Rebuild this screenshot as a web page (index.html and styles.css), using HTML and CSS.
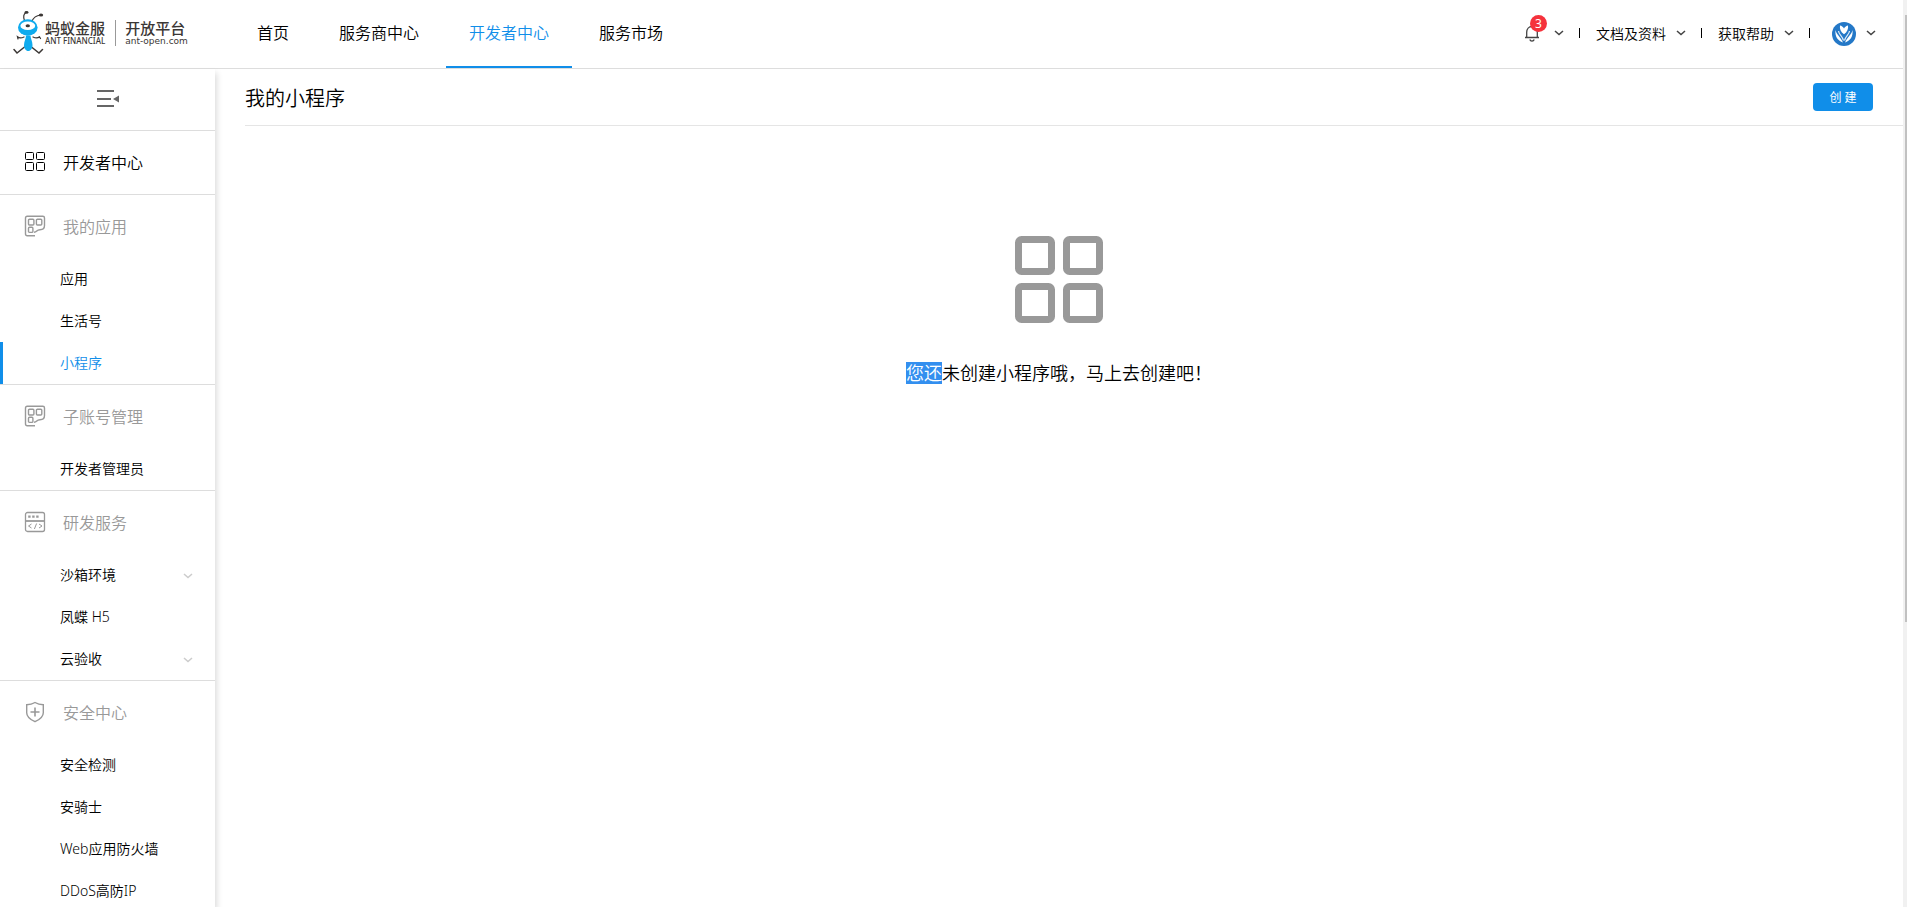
FILE: index.html
```html
<!DOCTYPE html>
<html lang="zh-CN">
<head>
  <meta charset="UTF-8" />
  <meta name="viewport" content="width=device-width, initial-scale=1.0" />
  <title>我的小程序 - 开放平台</title>
  <link rel="stylesheet" href="styles.css">
</head>
<body>
  <!-- shared icons -->
  <svg class="sprite" aria-hidden="true">
    <symbol id="i-down" viewBox="0 0 10 6"><path d="M1 1l4 3.6L9 1" fill="none" stroke="currentColor" stroke-width="1.5"/></symbol>
    <symbol id="i-app" viewBox="0 0 22 22">
      <g fill="none" stroke="currentColor" stroke-width="1.4">
        <path d="M11 20.7H3.2c-1 0-1.700-.7-1.700-1.700V3c0-1 .7-1.700 1.700-1.700h15.600c1 0 1.700.7 1.700 1.700v7.500c0 3-2 4.200-4.500 4.200-4 0-2.500 2.500-6 2.500"/>
        <rect x="4.500" y="4.200" width="5.400" height="5.800" rx="1"/>
        <rect x="12.400" y="4.200" width="5.400" height="5.800" rx="1"/>
        <rect x="4.500" y="12.200" width="4.400" height="5.200" rx="1"/>
      </g>
    </symbol>
  </svg>

  <div class="app">
    <header class="header">
      <a class="logo" href="#">
        <svg class="logo-ant" width="32" height="46" viewBox="0 0 32 46">
          <g fill="none" stroke="#3b3735" stroke-width="1.2" stroke-linecap="round">
            <path d="M11.500 10.500C10 6.500 10.500 4 13 2.500M19 11c1.500-3.500 4.500-5.500 8.500-6"/>
            <path d="M11 27c-2 1-4.500 1.500-6.500-.2L5 29M20 27c2 1 4.500 1.500 6.500-.2l1 1.700"/>
            <path d="M11.500 37l-7.500 6-3-3.500M18.500 37l7.500 6 3.500-3.500" stroke-width="1.500"/>
          </g>
          <ellipse cx="13.500" cy="2.400" rx="2" ry="1.400" fill="#3b3735"/>
          <ellipse cx="28" cy="5" rx="2.200" ry="1.500" fill="#3b3735"/>
          <ellipse cx="14.800" cy="17.500" rx="9.800" ry="8.300" fill="#0fabee"/>
          <ellipse cx="14.800" cy="15.800" rx="7.400" ry="4.300" fill="#fff"/>
          <ellipse cx="14.800" cy="15.800" rx="2.200" ry="1.500" fill="#3b3735"/>
          <path d="M13 25.500h4.500c0 3 2 6 2 9.500 0 3.500-1.800 6-4.200 6S11 38.500 11 35c0-3.500 2-6.500 2-9.500z" fill="#0fabee"/>
        </svg>
        <span class="logo-part logo-brand">
          <span class="logo-cn">蚂蚁金服</span>
          <span class="logo-en">ANT FINANCIAL</span>
        </span>
        <span class="logo-part logo-platform">
          <span class="logo-cn">开放平台</span>
          <span class="logo-en">ant-open.com</span>
        </span>
      </a>

      <nav class="nav">
        <a href="#">首页</a>
        <a href="#">服务商中心</a>
        <a href="#" class="active">开发者中心</a>
        <a href="#">服务市场</a>
      </nav>

      <div class="tools">
        <button class="tool" type="button" aria-label="消息">
          <span class="bell">
            <svg width="16" height="18" viewBox="0 0 16 18" fill="none" stroke="#444" stroke-width="1.3">
              <path d="M1 13.500h14M2.700 13.300V8.300C2.700 4.800 4.900 2.500 8 2.500s5.300 2.300 5.300 5.800v5M8 2.500V.8M5.800 15.500c.3 1 1.200 1.600 2.200 1.600s1.900-.6 2.200-1.600"/>
            </svg>
            <span class="badge">3</span>
          </span>
          <svg class="down"><use href="#i-down"/></svg>
        </button>
        <button class="tool" type="button">文档及资料<svg class="down"><use href="#i-down"/></svg></button>
        <button class="tool" type="button">获取帮助<svg class="down"><use href="#i-down"/></svg></button>
        <button class="tool" type="button" aria-label="账户">
          <svg class="avatar" width="24" height="24" viewBox="0 0 24 24">
            <circle cx="12" cy="12" r="12" fill="#2478c7"/>
            <path d="M8 3.500c1.500.2 3 1.200 4 3 1-1.800 2.500-2.800 4-3 .6 3.500-.8 6.500-4 8.700C8.800 10 7.400 7 8 3.500z" fill="#fff"/>
            <path d="M3.500 8c.8 4.500 4.500 6 7.500 12.500-5-1.500-8.300-6-7.500-12.500zM20.500 8c-.8 4.500-4.500 6-7.500 12.500 5-1.500 8.300-6 7.500-12.500z" fill="#fff"/>
            <path d="M6.500 9c.5 4 3.500 4.500 5 9.500M17.500 9c-.5 4-3.500 4.500-5 9.500" fill="none" stroke="#dcebf8" stroke-width="1.200"/>
          </svg>
          <svg class="down"><use href="#i-down"/></svg>
        </button>
      </div>
    </header>

    <div class="body">
      <aside class="sidebar">
        <button class="fold" type="button" aria-label="收起菜单">
          <svg width="22" height="18" viewBox="0 0 22 18">
            <path d="M0 1h17M0 9h14M0 16h17" stroke="#666" stroke-width="2"/>
            <path d="M22 5.500v7L16 9z" fill="#666"/>
          </svg>
        </button>

        <section class="group">
          <a class="group-title group-link" href="#">
            <svg width="22" height="22" viewBox="0 0 22 22" fill="none" stroke="currentColor">
              <rect x="1.500" y="1.500" width="8" height="7" rx="1"/><rect x="12.500" y="1.500" width="8" height="7" rx="1"/>
              <rect x="1.500" y="11.500" width="8" height="8" rx="1"/><rect x="12.500" y="11.500" width="8" height="8" rx="1"/>
            </svg>
            开发者中心
          </a>
        </section>

        <section class="group">
          <h2 class="group-title"><svg width="22" height="22"><use href="#i-app"/></svg>我的应用</h2>
          <a class="item" href="#">应用</a>
          <a class="item" href="#">生活号</a>
          <a class="item active" href="#">小程序</a>
        </section>

        <section class="group">
          <h2 class="group-title"><svg width="22" height="22"><use href="#i-app"/></svg>子账号管理</h2>
          <a class="item" href="#">开发者管理员</a>
        </section>

        <section class="group">
          <h2 class="group-title">
            <svg width="22" height="22" viewBox="0 0 22 22" fill="none" stroke="currentColor" stroke-width="1.3">
              <rect x="1.500" y="1.500" width="19" height="19" rx="2"/>
              <path d="M1.500 10h19" stroke-width="1.800"/>
              <path d="M4.200 5.600h2.400M8.200 5.600h2.400M12.200 5.600h2.400" stroke-width="2.200"/>
              <path d="M7.500 13l-3 2 3 2M12.600 12.500l-2.200 5.500M15 13l3 2-3 2" stroke-width="1"/>
            </svg>
            研发服务
          </h2>
          <a class="item" href="#">沙箱环境<svg class="down"><use href="#i-down"/></svg></a>
          <a class="item" href="#">凤蝶 H5</a>
          <a class="item" href="#">云验收<svg class="down"><use href="#i-down"/></svg></a>
        </section>

        <section class="group">
          <h2 class="group-title">
            <svg width="22" height="22" viewBox="0 0 22 22" fill="none" stroke="currentColor" stroke-width="1.4">
              <path d="M11 1.500c2.500 1.500 5 2.200 8.300 2.300v8c0 4-3.300 6.700-8.300 8.900-5-2.200-8.300-4.900-8.300-8.900v-8C6 3.700 8.500 3 11 1.500z"/>
              <path d="M11 6.500v9M6.500 11h9" stroke-width="1.600"/>
            </svg>
            安全中心
          </h2>
          <a class="item" href="#">安全检测</a>
          <a class="item" href="#">安骑士</a>
          <a class="item" href="#">Web应用防火墙</a>
          <a class="item" href="#">DDoS高防IP</a>
        </section>
      </aside>

      <main class="main">
        <div class="page-head">
          <h1>我的小程序</h1>
          <button class="btn-create" type="button">创 建</button>
        </div>
        <div class="empty">
          <svg width="88" height="88" viewBox="0 0 88 88" fill="none" stroke="#999" stroke-width="7">
            <rect x="3.500" y="3.500" width="33" height="32" rx="3"/><rect x="51.500" y="3.500" width="33" height="32" rx="3"/>
            <rect x="3.500" y="50.500" width="33" height="33" rx="3"/><rect x="51.500" y="50.500" width="33" height="33" rx="3"/>
          </svg>
          <p><span class="selected">您还</span>未创建小程序哦，马上去创建吧！</p>
        </div>
      </main>
    </div>

    <div class="scrollbar"><div class="scrollbar-thumb"></div></div>
  </div>
</body>
</html>
```
FILE: styles.css
```css
* {
  box-sizing: border-box;
}
body {
  margin: 0;
  font-family: "Noto Sans", "Noto Sans CJK SC", sans-serif;
  font-size: 14px;
  font-weight: 350;
  color: #000;
  background: #fff;
}
a {
  color: inherit;
  text-decoration: none;
}
button {
  font: inherit;
  color: inherit;
  background: none;
  border: 0;
  padding: 0;
  cursor: pointer;
}
h1, h2, p {
  margin: 0;
  font-weight: inherit;
}
svg {
  display: block;
  flex: none;
}
.sprite {
  position: absolute;
  width: 0;
  height: 0;
}
.app {
  position: relative;
  display: flex;
  flex-direction: column;
  height: 100vh;
  padding-right: 4px;
  overflow: hidden;
}

/* header */
.header {
  display: flex;
  flex: none;
  height: 69px;
  border-bottom: 1px solid #ddd;
}
.logo {
  display: flex;
  align-items: center;
  width: 234px;
  padding: 0 0 2px 13px;
  color: #3b3735;
}
.logo-part {
  display: flex;
  flex-direction: column;
  font-weight: 500;
}
.logo-brand {
  padding-right: 10px;
  border-right: 1px solid #999;
}
.logo-platform {
  padding-left: 9px;
}
.logo-cn {
  font-size: 15px;
  line-height: 16px;
}
.logo-en {
  font-size: 8px;
  line-height: 10px;
}
.logo-platform .logo-en {
  font-family: "DejaVu Sans", sans-serif;
  font-size: 9px;
}
.nav {
  display: flex;
  gap: 4px;
  flex: 1;
  font-size: 16px;
}
.nav a {
  padding: 0 23px;
  line-height: 66px;
  border-bottom: 2px solid transparent;
}
.nav .active {
  color: #108ee9;
  border-color: #108ee9;
}
.tools {
  display: flex;
  align-items: center;
  padding: 0 27px 3px 0;
}
.tool {
  display: flex;
  align-items: center;
  gap: 10px;
}
.tool + .tool::before {
  content: "";
  width: 1px;
  height: 10px;
  margin: 0 6px 0 15px;
  background: #000;
}
.down {
  width: 10px;
  height: 6px;
  color: #444;
}
.bell {
  position: relative;
  margin-right: 4px;
}
.badge {
  position: absolute;
  top: -9px;
  left: 6px;
  width: 17px;
  height: 17px;
  border-radius: 50%;
  background: #f5323c;
  color: #fff;
  font-size: 12px;
  font-weight: 400;
  line-height: 17px;
  text-align: center;
}
.avatar {
  margin: 2px 0 0 6px;
}

/* body */
.body {
  display: flex;
  flex: 1;
  min-height: 0;
}
.sidebar {
  flex: none;
  width: 215px;
  overflow: hidden;
  box-shadow: 2px 4px 6px rgba(0, 0, 0, 0.14);
}
.fold {
  display: flex;
  align-items: center;
  justify-content: center;
  width: 100%;
  height: 62px;
  padding-bottom: 2px;
  border-bottom: 1px solid #ddd;
}
.group {
  border-bottom: 1px solid #ddd;
}
.group-title {
  display: flex;
  align-items: center;
  gap: 17px;
  height: 63px;
  padding: 0 0 2px 24px;
  font-size: 16px;
  color: #999;
}
.group-link {
  color: #000;
}
.item {
  display: flex;
  align-items: center;
  justify-content: space-between;
  height: 42px;
  padding: 0 22px 2px 57px;
  border-left: 3px solid transparent;
}
.item.active {
  color: #108ee9;
  border-color: #108ee9;
}
.item .down {
  margin-top: 4px;
  color: #ccc;
}
.main {
  flex: 1;
  min-width: 0;
  padding-left: 30px;
}
.page-head {
  display: flex;
  align-items: center;
  justify-content: space-between;
  height: 57px;
  padding-right: 30px;
  border-bottom: 1px solid #e5e5e5;
}
.page-head h1 {
  font-size: 20px;
}
.btn-create {
  width: 60px;
  height: 28px;
  border-radius: 4px;
  background: #108ee9;
  color: #fff;
  font-size: 12px;
  font-weight: 400;
}
.empty {
  display: flex;
  flex-direction: column;
  align-items: center;
  gap: 38px;
  padding: 110px 30px 0 0;
  font-size: 18px;
  line-height: 22px;
}
.selected {
  display: inline-block;
  background: #338fef;
  color: #fff;
}

/* scrollbar */
.scrollbar {
  position: absolute;
  top: 0;
  right: 0;
  width: 4px;
  height: 100%;
  padding: 15px 0 0 2px;
  background: #f1f1f1;
}
.scrollbar-thumb {
  height: 68%;
  background: #c1c1c1;
}
```
